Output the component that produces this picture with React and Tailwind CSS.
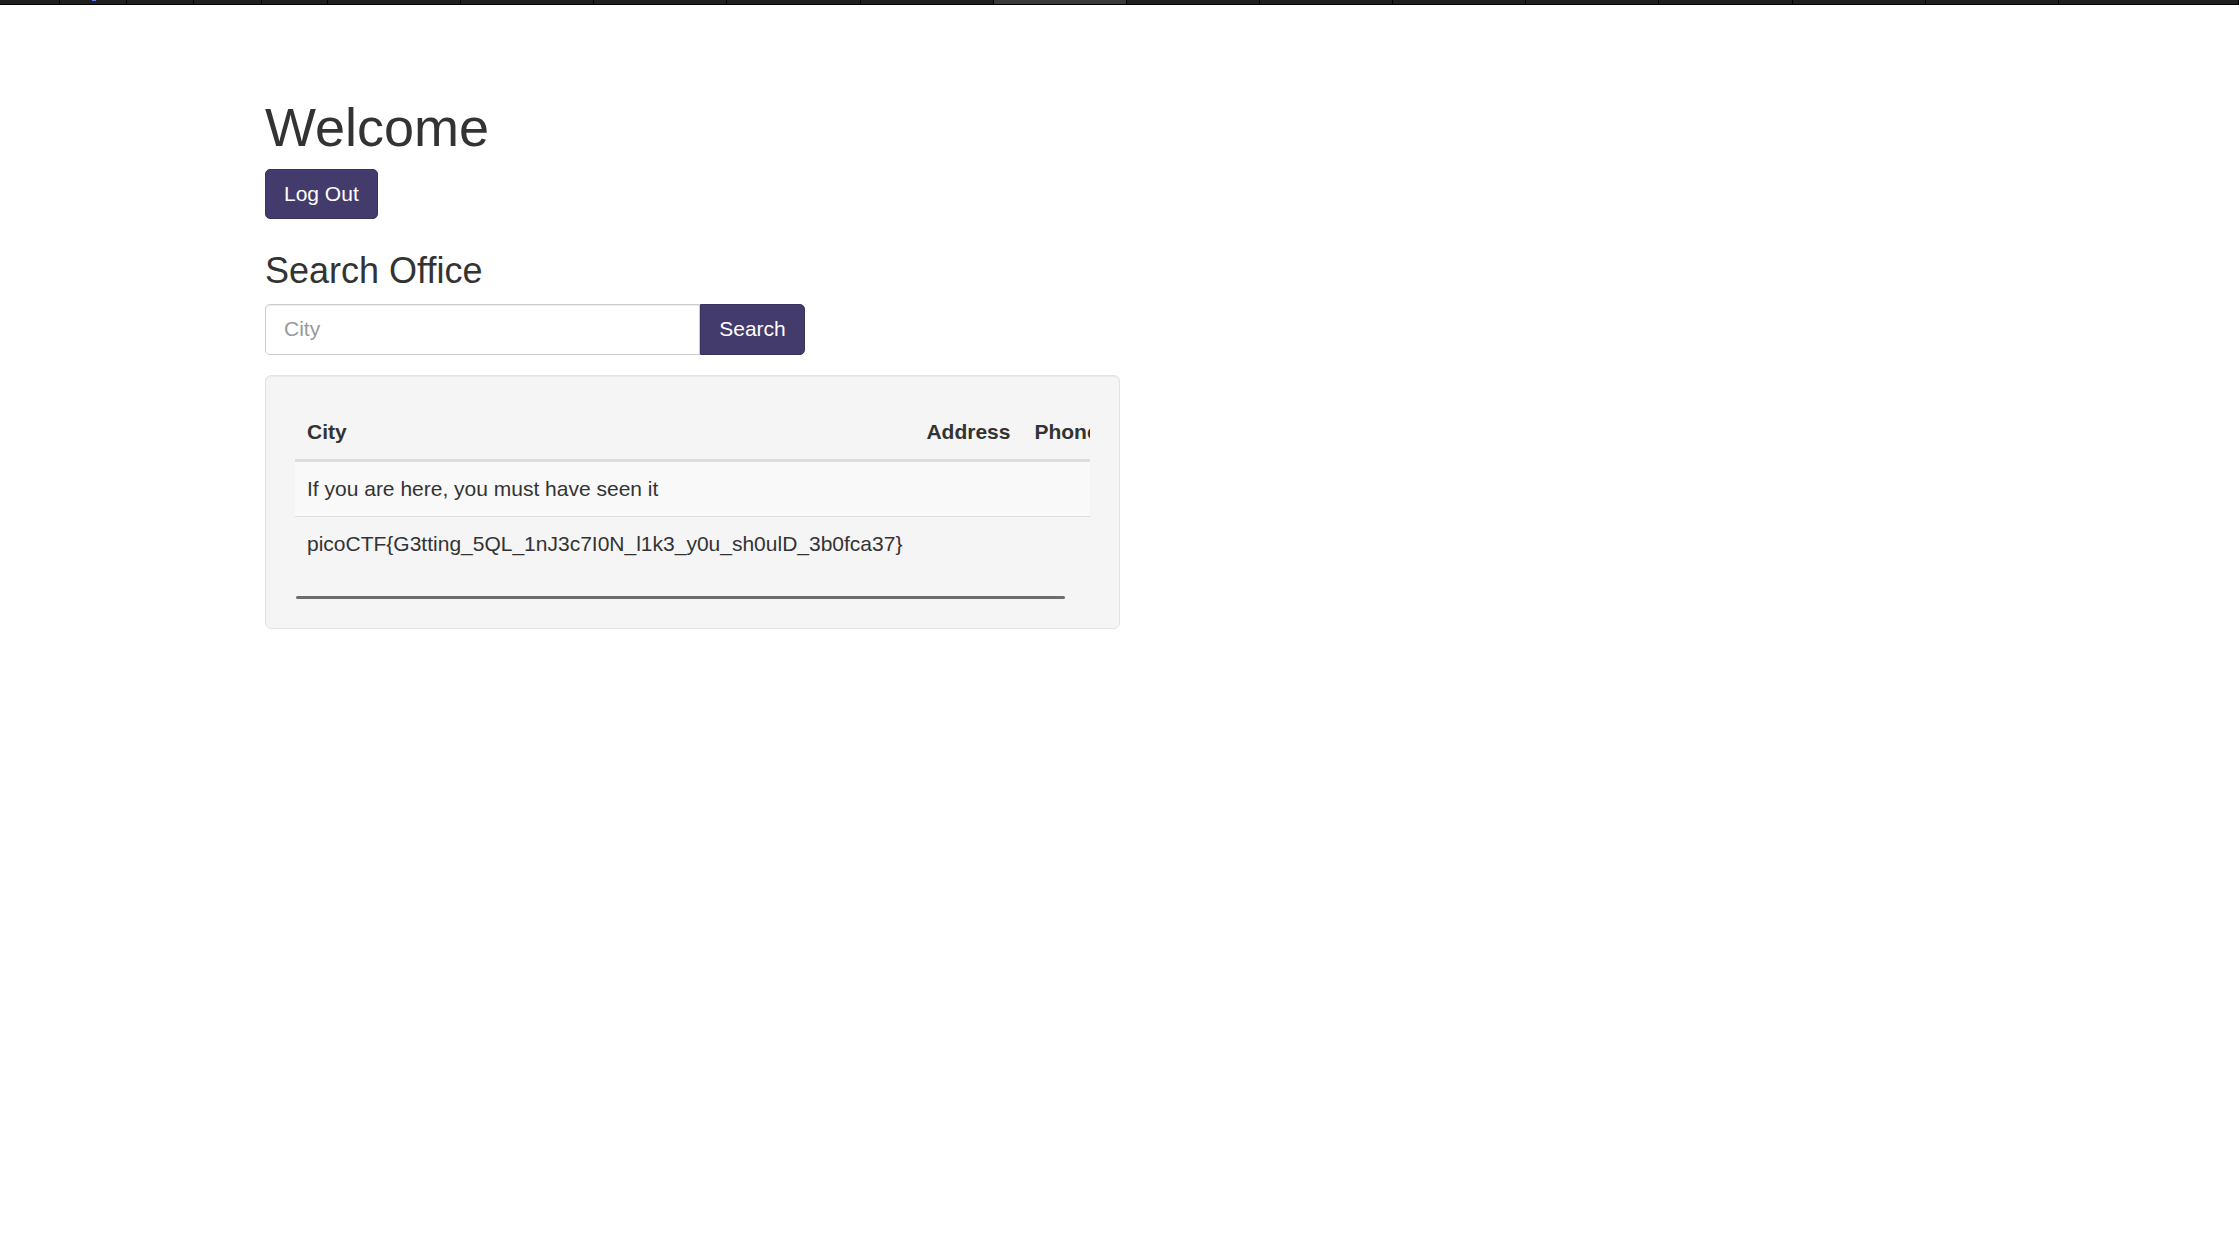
import { useState } from 'react'

// tab strip along the top edge: [width, highlighted]
const TABS = [
  [60, false], [67, false], [67, false], [68, false], [66, false],
  [133, false], [133, false], [133, false], [134, false], [133, false],
  [133, true], [133, false], [133, false], [133, false], [133, false],
  [134, false], [133, false], [133, false], [180, false],
]

const OFFICES = [
  { city: 'If you are here, you must have seen it', address: '', phone: '' },
  { city: 'picoCTF{G3tting_5QL_1nJ3c7I0N_l1k3_y0u_sh0ulD_3b0fca37}', address: '', phone: '' },
]

function TabStrip() {
  return (
    <div className="flex h-[5px] bg-black">
      {TABS.map(([w, active], i) => (
        <div
          key={i}
          style={{ width: w }}
          className={`relative h-[4px] shrink-0 border-r border-black ${active ? 'bg-[#3b3b3b]' : 'bg-[#1f1f1f]'}`}
        >
          {i === 1 && <span className="absolute left-[32px] top-0 h-[1px] w-[4px] bg-[#5b7bff]" />}
        </div>
      ))}
      <div className="flex-1 h-[4px] bg-[#1f1f1f]" />
    </div>
  )
}

export default function App() {
  const [city, setCity] = useState('')

  return (
    <div className="min-h-screen bg-white text-[#333] font-['Liberation_Sans',Arial,sans-serif] text-[21px] leading-[30px]">
      <TabStrip />
      <div className="pl-[265px]">
        <h1 className="mt-[93px] text-[54px] leading-[1.1] font-normal">Welcome</h1>
        <button className="mt-[12px] h-[50px] px-[18px] rounded-[5px] border border-[#3a335e] bg-[#433b6b] text-white">
          Log Out
        </button>

        <h3 className="mt-[32px] text-[36px] leading-[1.1] font-normal">Search Office</h3>
        <div className="mt-[13px] flex w-[540px]">
          <input
            value={city}
            onChange={e => setCity(e.target.value)}
            placeholder="City"
            className="h-[51px] w-[435px] rounded-l-[5px] border border-[#ccc] bg-white px-[18px] text-[21px] text-[#555] placeholder:text-[#999] outline-none shadow-[inset_0_1px_1px_rgba(0,0,0,0.075)]"
          />
          <button className="h-[51px] w-[105px] rounded-r-[5px] border border-[#3a335e] bg-[#433b6b] text-white">
            Search
          </button>
        </div>

        <div className="mt-[20px] w-[855px] rounded-[6px] border border-[#e3e3e3] bg-[#f5f5f5] px-[29px] pt-[29px] pb-[29px] shadow-[inset_0_1px_1px_rgba(0,0,0,0.05)]">
          <div className="w-full overflow-hidden">
            <table className="w-full border-collapse text-left">
              <thead>
                <tr>
                  <th className="whitespace-nowrap border-b-[3px] border-[#ddd] px-[12px] py-[12px] font-bold">City</th>
                  <th className="whitespace-nowrap border-b-[3px] border-[#ddd] px-[12px] py-[12px] font-bold">Address</th>
                  <th className="whitespace-nowrap border-b-[3px] border-[#ddd] px-[12px] py-[12px] font-bold">Phone</th>
                </tr>
              </thead>
              <tbody>
                {OFFICES.map((o, i) => (
                  <tr key={i} className={i % 2 === 0 ? 'bg-[#f9f9f9]' : 'border-t border-[#ddd]'}>
                    <td className="whitespace-nowrap px-[12px] py-[12px]">{o.city}</td>
                    <td className="whitespace-nowrap px-[12px] py-[12px]">{o.address}</td>
                    <td className="whitespace-nowrap px-[12px] py-[12px]">{o.phone}</td>
                  </tr>
                ))}
              </tbody>
            </table>
          </div>
          {/* horizontal scroll thumb under the clipped table */}
          <div className="mt-[25px] ml-[1px] h-[3px] w-[769px] rounded-full bg-[#6d6d6d]" />
        </div>
      </div>
    </div>
  )
}
